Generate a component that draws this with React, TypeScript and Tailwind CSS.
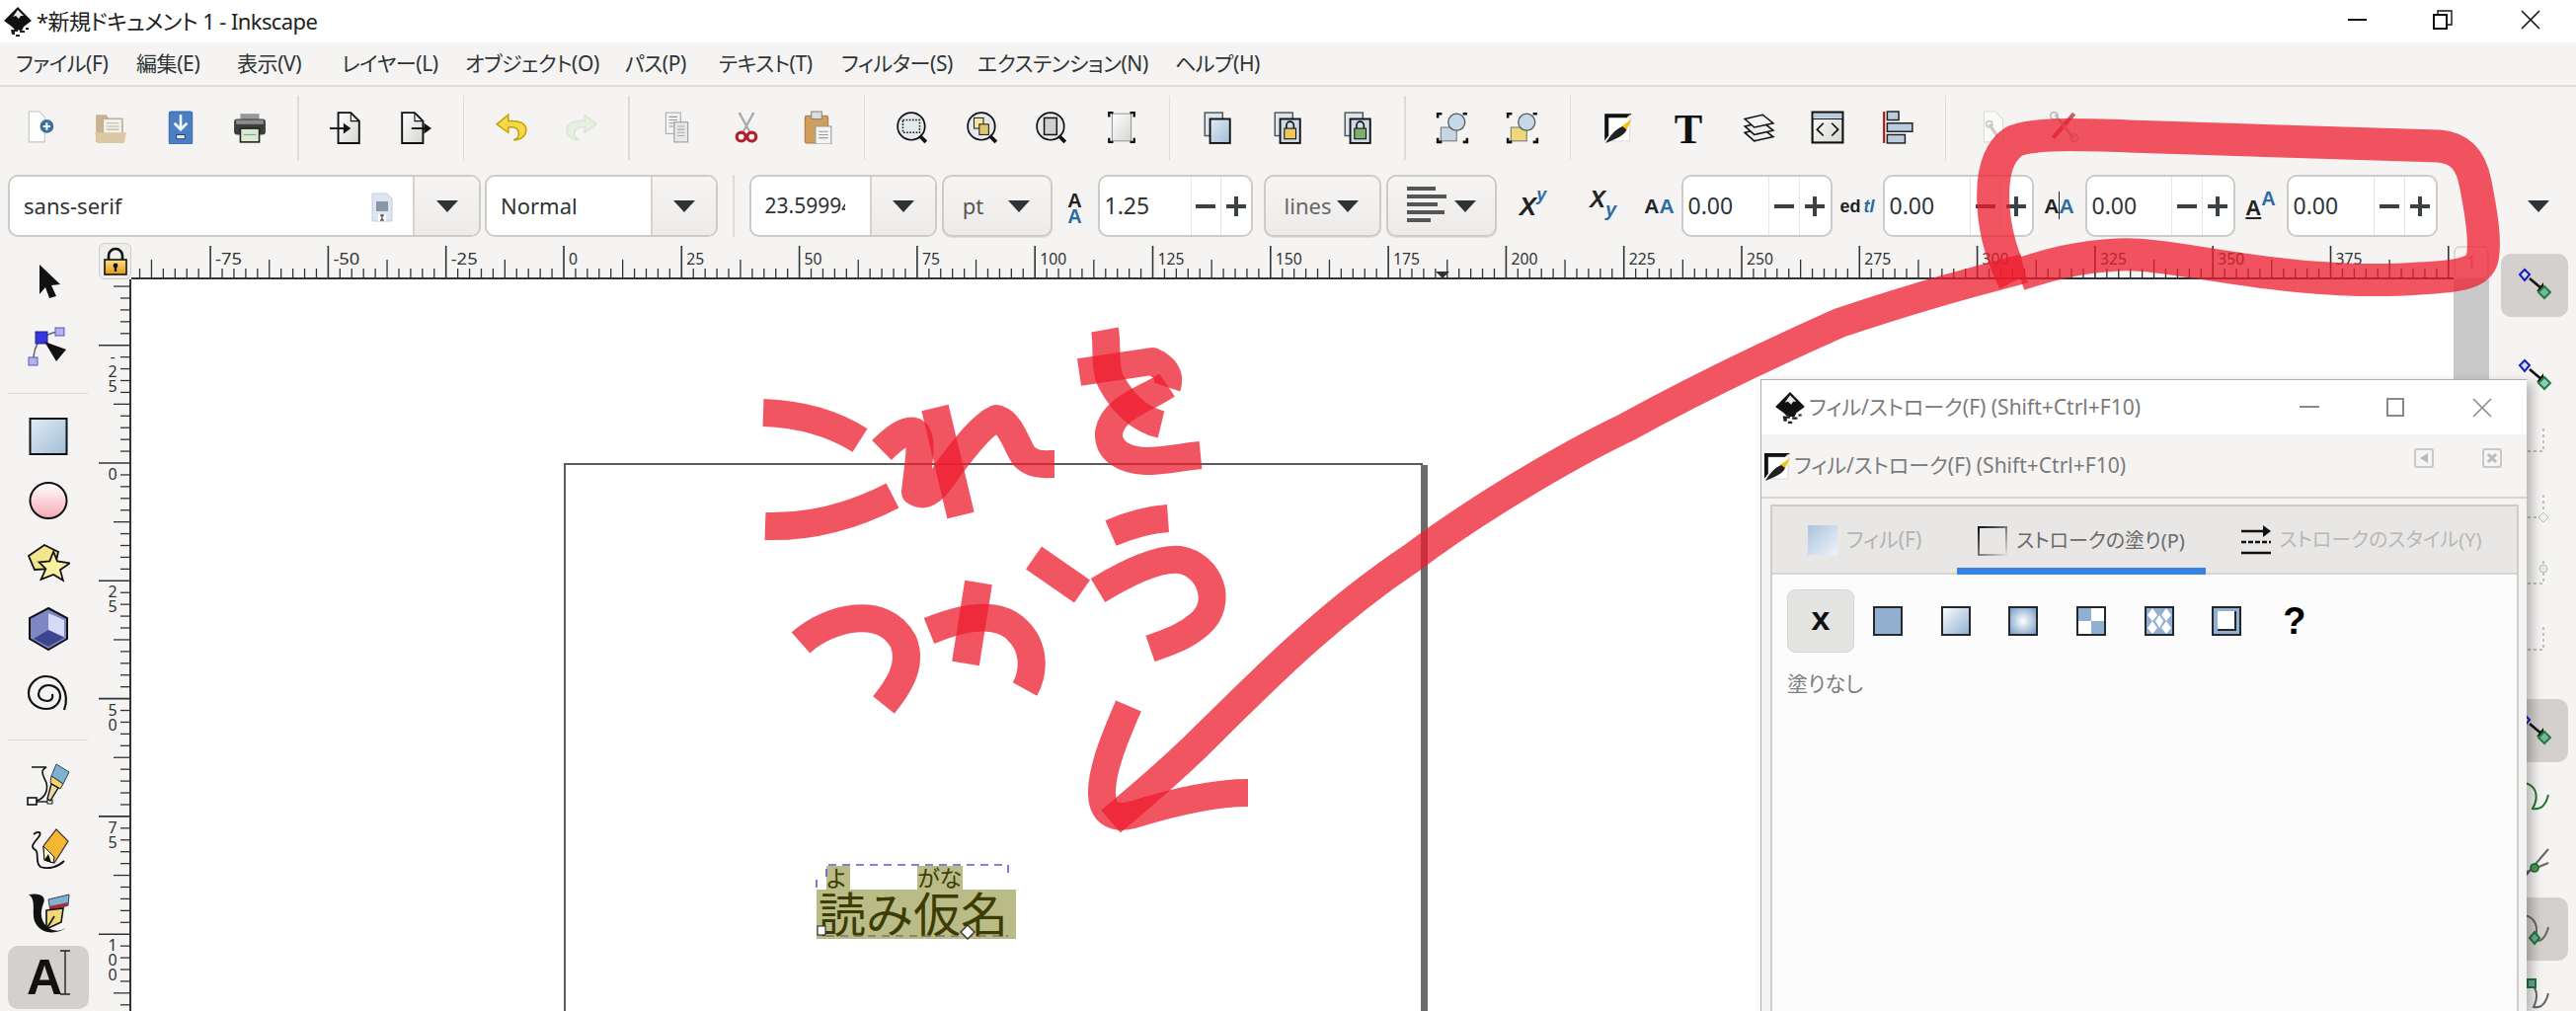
import React from 'react';

const UI_TEXT = '#2e3436';

// shared gradients for the toolbar icons
const Defs = () => (
  <svg className="absolute w-0 h-0">
    <defs>
      <linearGradient id="blueFade" x1="0" y1="0" x2="1" y2="1">
        <stop offset="0" stopColor="#a9c3de" />
        <stop offset="1" stopColor="#eef3f9" />
      </linearGradient>
      <linearGradient id="rectFill" x1="0" y1="0" x2="1" y2="1">
        <stop offset="0" stopColor="#e3ecf4" />
        <stop offset="1" stopColor="#9fbdd8" />
      </linearGradient>
      <linearGradient id="pinkFill" x1="0" y1="0" x2="0" y2="1">
        <stop offset="0" stopColor="#fff" />
        <stop offset="1" stopColor="#f7a9b4" />
      </linearGradient>
      <linearGradient id="pageFill" x1="0" y1="0" x2="1" y2="1">
        <stop offset="0" stopColor="#fff" />
        <stop offset="1" stopColor="#d4d4d0" />
      </linearGradient>
      <linearGradient id="gold" x1="0" y1="0" x2="0" y2="1">
        <stop offset="0" stopColor="#ffe083" />
        <stop offset="1" stopColor="#e39a12" />
      </linearGradient>
      <linearGradient id="strokeEdge" x1="0" y1="0" x2="1" y2="1">
        <stop offset="0" stopColor="#111" />
        <stop offset="1" stopColor="#ddd" />
      </linearGradient>
      <linearGradient id="swatchLinear" x1="0" y1="0" x2="1" y2="1">
        <stop offset="0" stopColor="#fff" />
        <stop offset="1" stopColor="#8eaed0" />
      </linearGradient>
      <radialGradient id="radial" cx="0.5" cy="0.5" r="0.6">
        <stop offset="0" stopColor="#fff" />
        <stop offset="1" stopColor="#7fa3c8" />
      </radialGradient>
    </defs>
  </svg>
);

const Logo = ({ size = 34 }: { size?: number }) => (
  <svg width={size} height={size} viewBox="0 0 32 32">
    <path d="M16 1 L30 15 L22 21 L20 25 L13 24 L10 21 L2 15 Z" fill="#111" />
    <path d="M16 4 L22 10 L19 10 L17 13 L14 10 L11 11 Z" fill="#e8e8e8" />
    <path d="M9 24 h7 v2 h-3 v3 h-3 z M18 25 h5 v2 h-5z M14 29 h4 v2 h-4z M24 22 h3 v2 h-3z" fill="#222" />
  </svg>
);

const S = ({ children, o = 1 }: { children: React.ReactNode; o?: number }) => (
  <svg width="34" height="34" viewBox="0 0 32 32" opacity={o}>{children}</svg>
);

const DocNew = () => (
  <S>
    <path d="M5 1 H15 L20 6 V30 H5 Z" fill="#fff" stroke="#c4c4c4" />
    <circle cx="22" cy="15" r="6.5" fill="#3f6ea3" />
    <path d="M22 11.5 v7 M18.5 15 h7" stroke="#fff" strokeWidth="2" />
  </S>
);
const OpenDoc = () => (
  <S>
    <path d="M2 4 H12 L14 7 H28 V30 H2 Z" fill="#c9b290" />
    <rect x="9" y="8" width="18" height="15" fill="#f3f1ec" stroke="#b6b0a4" />
    <path d="M12 12 h12 M12 15 h12 M12 18 h12" stroke="#bdb7ab" />
    <path d="M1 21 H31 L29 31 H3 Z" fill="#dcc7a5" />
  </S>
);
const SaveDoc = () => (
  <S>
    <rect x="5" y="1" width="22" height="31" rx="2" fill="#4a7fc4" stroke="#3768a8" />
    <path d="M16 4 V17 M10 12 L16 18 L22 12" stroke="#fff" strokeWidth="2.4" fill="none" />
    <rect x="12" y="23" width="8" height="4" fill="#dfe8f3" stroke="#223" strokeWidth="0.7" />
  </S>
);
const PrintDoc = () => (
  <S>
    <rect x="7" y="3" width="18" height="7" fill="#999" />
    <rect x="1" y="8" width="30" height="15" rx="3" fill="#3d3f3f" />
    <rect x="3" y="9" width="26" height="4" fill="#8b8d8c" />
    <rect x="7" y="17" width="18" height="13" fill="#dbe8d2" stroke="#222" strokeWidth="1.5" />
    <path d="M10 23 h12" stroke="#6a9" />
  </S>
);
const ImportDoc = () => (
  <S>
    <path d="M9 2 H21 L29 10 V31 H9 Z" fill="url(#pageFill)" stroke="#111" strokeWidth="1.8" />
    <path d="M21 2 V10 H29" fill="none" stroke="#111" />
    <path d="M1 17 H17" stroke="#111" strokeWidth="1.8" />
    <path d="M14 12 L21 17 L14 22 Z" fill="#111" />
  </S>
);
const ExportDoc = () => (
  <S>
    <path d="M3 2 H15 L23 10 V31 H3 Z" fill="url(#pageFill)" stroke="#111" strokeWidth="1.8" />
    <path d="M15 2 V10 H23" fill="none" stroke="#111" />
    <path d="M12 17 H26" stroke="#111" strokeWidth="1.8" />
    <path d="M24 12 L31 17 L24 22 Z" fill="#111" />
  </S>
);
const Undo = () => (
  <S>
    <path d="M13 4 L2 13 L13 21 V16 C19 15 23 17 23 22 C23 25 21 27 18 28 C25 28 30 24 30 18 C30 12 23 9 13 10 Z" fill="#f6d94a" stroke="#c4a000" strokeWidth="1.4" />
  </S>
);
const Redo = () => (
  <S o={0.6}>
    <path d="M19 4 L30 13 L19 21 V16 C13 15 9 17 9 22 C9 25 11 27 14 28 C7 28 2 24 2 18 C2 12 9 9 19 10 Z" fill="#dfeeda" stroke="#c6dcc0" strokeWidth="1.4" />
  </S>
);
const CopyDoc = () => (
  <S>
    <rect x="6" y="2" width="14" height="20" fill="#f3f3f3" stroke="#aaa" />
    <path d="M9 6 h8 M9 9 h8 M9 12 h8 M9 15 h8" stroke="#999" />
    <rect x="14" y="11" width="13" height="19" fill="#e8e8e8" stroke="#999" />
    <path d="M17 15 h7 M17 18 h7 M17 21 h7 M17 24 h7" stroke="#aaa" />
  </S>
);
const CutDoc = () => (
  <S>
    <path d="M9 2 L19 20 M23 2 L13 20" stroke="#aaa" strokeWidth="2.2" />
    <circle cx="11" cy="25" r="4.2" fill="none" stroke="#b3202a" strokeWidth="3" />
    <circle cx="21" cy="25" r="4.2" fill="none" stroke="#b3202a" strokeWidth="3" />
  </S>
);
const PasteDoc = () => (
  <S>
    <rect x="5" y="5" width="22" height="26" rx="2" fill="#cf9d5c" stroke="#a97a3e" />
    <rect x="11" y="1" width="10" height="7" fill="#ddd" stroke="#888" />
    <rect x="15" y="15" width="15" height="17" fill="#f3f3f3" stroke="#999" />
    <path d="M18 20 h9 M18 23 h9 M18 26 h9" stroke="#999" />
  </S>
);
const Lens = ({ children }: { children: React.ReactNode }) => (
  <S>
    <circle cx="15" cy="15" r="13" fill="#e4e9ec" stroke="#111" strokeWidth="1.6" />
    {children}
    <path d="M23 24 L29 30" stroke="#111" strokeWidth="3.6" />
  </S>
);
const ZoomSel = () => <Lens><rect x="7" y="9" width="16" height="12" fill="none" stroke="#111" strokeWidth="1.4" strokeDasharray="1.5 1.5" /></Lens>;
const ZoomDraw = () => (
  <Lens>
    <rect x="8" y="7" width="9" height="10" fill="#f6e7a0" stroke="#222" />
    <rect x="13" y="13" width="9" height="10" fill="#e0c66a" stroke="#222" />
  </Lens>
);
const ZoomPage = () => <Lens><rect x="9" y="7" width="12" height="16" fill="#cfcfcf" stroke="#111" strokeWidth="1.4" /></Lens>;
const FitPage = () => (
  <S>
    <rect x="7" y="3" width="18" height="26" fill="url(#pageFill)" stroke="#999" />
    <path d="M4 6 V2 H8 M24 2 H28 V6 M4 26 V30 H8 M24 30 H28 V26" fill="none" stroke="#111" strokeWidth="2.2" />
  </S>
);
const Dup = () => (
  <S>
    <rect x="4" y="2" width="17" height="22" fill="#dbe6ef" stroke="#555" strokeWidth="1.4" />
    <rect x="9" y="8" width="19" height="23" fill="url(#rectFill)" stroke="#111" strokeWidth="1.8" />
  </S>
);
const Clone = ({ color }: { color: string }) => (
  <S>
    <rect x="4" y="2" width="17" height="22" fill="#dbe6ef" stroke="#555" strokeWidth="1.4" />
    <rect x="9" y="8" width="19" height="23" fill="#cfdce8" stroke="#111" strokeWidth="1.8" />
    <path d="M15 17 V14 a3.5 3.5 0 0 1 7 0 V17" fill="none" stroke="#111" strokeWidth="1.5" />
    <rect x="13" y="17" width="11" height="10" fill={color} stroke="#111" />
  </S>
);
const Group = ({ color }: { color: string }) => (
  <S>
    <rect x="5" y="16" width="15" height="13" fill={color} stroke="#777" />
    <circle cx="20" cy="11" r="8" fill="#c4d8e8" stroke="#555" strokeWidth="1.2" />
    <path d="M2 7 V3 H6 M2 26 V30 H6 M26 3 H30 M26 30 H30 V26" fill="none" stroke="#111" strokeWidth="2.4" />
  </S>
);
const FillStroke = ({ size = 34 }: { size?: number }) => (
  <svg width={size} height={size} viewBox="0 0 32 32">
    <path d="M3 3 H29 L24 7 H7 V24 L3 29 Z" fill="#111" />
    <path d="M3 29 L7 24 V7 H24 L27 4 V29 Z" fill="#fff" stroke="#bbb" strokeWidth="0.5" />
    <path d="M29 8 L24 18 L19 15 Z" fill="#f5c211" />
    <path d="M20 15 L24 18 C22 24 13 27 4 31 C8 24 13 18 20 15 Z" fill="#222" />
  </svg>
);
const TextIco = () => (
  <svg width="36" height="36" viewBox="0 0 32 32">
    <text x="16" y="30" textAnchor="middle" fontFamily="Liberation Serif" fontWeight="700" fontSize="38" fill="#111">T</text>
  </svg>
);
const Layers = () => (
  <S>
    <path d="M3 21 L20 17 L30 25 L12 29 Z" fill="#eee" stroke="#111" strokeWidth="1.5" />
    <path d="M3 15 L20 11 L30 19 L12 23 Z" fill="#eee" stroke="#111" strokeWidth="1.5" />
    <path d="M3 8 L20 4 L30 12 L12 16 Z" fill="#f4f4f4" stroke="#111" strokeWidth="1.5" />
  </S>
);
const Xml = () => (
  <S>
    <rect x="1.5" y="1.5" width="29" height="29" fill="url(#pageFill)" stroke="#111" strokeWidth="2" />
    <rect x="2.5" y="3" width="27" height="4" fill="#b5c9dc" />
    <path d="M2 8 H30" stroke="#111" />
    <path d="M12 12 L6 18 L12 24 M20 12 L26 18 L20 24" fill="none" stroke="#111" strokeWidth="1.6" />
  </S>
);
const Align = () => (
  <S>
    <path d="M3 1 V31" stroke="#a11" strokeWidth="2" />
    <rect x="6" y="1" width="11" height="8" fill="#b9cde0" stroke="#222" strokeWidth="1.4" />
    <rect x="6" y="12" width="24" height="8" fill="#b9cde0" stroke="#222" strokeWidth="1.4" />
    <rect x="6" y="23" width="17" height="8" fill="#b9cde0" stroke="#222" strokeWidth="1.4" />
  </S>
);
const PrefsDoc = () => (
  <S o={0.55}>
    <path d="M7 1 H18 L25 8 V30 H7 Z" fill="#fff" stroke="#ccc" />
    <path d="M12 13 L20 25" stroke="#aaa" strokeWidth="3" />
    <circle cx="12" cy="13" r="3" fill="none" stroke="#aaa" strokeWidth="1.5" />
  </S>
);
const Tools = () => (
  <S o={0.75}>
    <path d="M26 3 L6 26" stroke="#b3303a" strokeWidth="4" />
    <path d="M8 4 L26 27" stroke="#aaa" strokeWidth="2.5" />
    <circle cx="7" cy="5" r="3.5" fill="none" stroke="#aaa" strokeWidth="1.5" />
    <circle cx="26" cy="26" r="3.5" fill="none" stroke="#aaa" strokeWidth="1.5" />
  </S>
);

const mainTools: (React.FC | null)[] = [
  DocNew, OpenDoc, SaveDoc, PrintDoc, null,
  ImportDoc, ExportDoc, null,
  Undo, Redo, null,
  CopyDoc, CutDoc, PasteDoc, null,
  ZoomSel, ZoomDraw, ZoomPage, FitPage, null,
  Dup, () => <Clone color="#f0c95c" />, () => <Clone color="#7fae6b" />, null,
  () => <Group color="#c6d6e4" />, () => <Group color="#f0d77a" />, null,
  FillStroke, TextIco, Layers, Xml, Align, null,
  PrefsDoc, Tools,
];

// menu label and the distance to the start of the next one
const menus: [string, string][] = [
  ['ファイル(F)', 'w-[122px]'],
  ['編集(E)', 'w-[102px]'],
  ['表示(V)', 'w-[106px]'],
  ['レイヤー(L)', 'w-[125px]'],
  ['オブジェクト(O)', 'w-[162px]'],
  ['パス(P)', 'w-[95px]'],
  ['テキスト(T)', 'w-[124px]'],
  ['フィルター(S)', 'w-[138px]'],
  ['エクステンション(N)', 'w-[200px]'],
  ['ヘルプ(H)', 'w-[100px]'],
];

const Caret = ({ big = true }: { big?: boolean }) => (
  <svg width={big ? 24 : 20} height={14} viewBox="0 0 24 14">
    <path d="M1 1 H23 L12 13 Z" fill="#2e3436" />
  </svg>
);

const ComboBtn = ({ className, children }: { className: string; children: React.ReactNode }) => (
  <div className={`h-[63px] flex items-center justify-center border-2 border-[#cdcbc7] rounded-[10px] bg-gradient-to-b from-[#f6f5f4] to-[#edebe9] shadow-[0_1px_1px_rgba(0,0,0,.1)] ${className}`}>
    {children}
  </div>
);

const Combo = ({ w, split, text }: { w: string; split: string; text: React.ReactNode }) => (
  <div className={`h-[63px] flex border-2 border-[#cdcbc7] rounded-[10px] overflow-hidden bg-white ${w}`}>
    <div className="flex-1 flex items-center pl-[14px] text-[22px] relative">{text}</div>
    <div className={`flex items-center justify-center border-l-2 border-[#d5d3cf] bg-gradient-to-b from-[#f6f5f4] to-[#edebe9] ${split}`}>
      <Caret />
    </div>
  </div>
);

const Spin = ({ value, w, entry, cell }: { value: string; w: string; entry: string; cell: string }) => (
  <div className={`h-[63px] flex border-2 border-[#cdcbc7] rounded-[10px] overflow-hidden bg-white ${w}`}>
    <div className={`flex items-center pl-[5px] text-[23px] ${entry}`}>{value}</div>
    <div className={`flex items-center justify-center border-l border-[#e6e5e3] ${cell}`}>
      <div className="w-[20px] h-[4px] bg-[#3b4144]" />
    </div>
    <div className={`flex items-center justify-center border-l border-[#e6e5e3] relative ${cell}`}>
      <div className="w-[20px] h-[4px] bg-[#3b4144]" />
      <div className="absolute w-[4px] h-[20px] bg-[#3b4144]" />
    </div>
  </div>
);

// two letter "A" style icons in the text toolbar, kept as live text
const TA = ({ children, className }: { children: React.ReactNode; className: string }) => (
  <span className={`font-['Liberation_Sans',sans-serif] font-bold leading-none ${className}`}>{children}</span>
);

const RULER_W = 2352;
const UNIT = 119.3;
const ZERO_X = 571 - 133;
const ZERO_Y = 469 - 283;

const HRuler = () => {
  const ticks: React.ReactNode[] = [];
  const labels: React.ReactNode[] = [];
  for (let i = -100; i <= 450; i += 2.5) {
    const x = ZERO_X + (i / 25) * UNIT;
    if (x < 0 || x > RULER_W) continue;
    const major = i % 25 === 0;
    const mid = i % 12.5 === 0;
    ticks.push(<line key={i} x1={x} x2={x} y1={major ? 3 : mid ? 17 : 26} y2={36} stroke={UI_TEXT} strokeWidth={major ? 1.6 : 1.3} />);
    if (major && i >= -75) {
      labels.push(
        <text key={`l${i}`} x={x + 5} y={22} fontSize="17" fill={UI_TEXT} fontFamily="Noto Sans" textLength={String(i).length * 9} lengthAdjust="spacingAndGlyphs">{i}</text>
      );
    }
  }
  return (
    <svg width={RULER_W} height={37} className="block">
      {ticks}
      {labels}
      <line x1={0} x2={RULER_W} y1={36} y2={36} stroke={UI_TEXT} strokeWidth="2" />
      <path d="M1321 29 H1335 L1328 36 Z" fill={UI_TEXT} />
    </svg>
  );
};

const VRuler = () => {
  const ticks: React.ReactNode[] = [];
  const labels: React.ReactNode[] = [];
  for (let i = -75; i <= 200; i += 2.5) {
    const y = ZERO_Y + (i / 25) * UNIT;
    if (y < 0 || y > 741) continue;
    const major = i % 25 === 0;
    const mid = i % 12.5 === 0;
    ticks.push(<line key={i} y1={y} y2={y} x1={major ? 0 : mid ? 15 : 22} x2={33} stroke={UI_TEXT} strokeWidth={major ? 1.6 : 1.3} />);
    if (major) {
      String(i).split('').forEach((ch, n) => {
        labels.push(
          <text key={`l${i}-${n}`} x={14} y={y + 17 + n * 15} textAnchor="middle" fontSize="16" fill={UI_TEXT} fontFamily="Noto Sans">{ch}</text>
        );
      });
    }
  }
  return (
    <svg width={33} height={741} className="block shrink-0">
      {ticks}
      {labels}
      <line x1={32} x2={32} y1={0} y2={741} stroke={UI_TEXT} strokeWidth="2" />
    </svg>
  );
};

const T = ({ children }: { children: React.ReactNode }) => (
  <svg width="44" height="44" viewBox="0 0 44 44">{children}</svg>
);

const leftTools: React.ReactNode[] = [
  <T><path d="M13 6 L34 26 L25 27 L30 38 L23 40 L19 29 L13 36 Z" fill="#111" transform="translate(0 -1)" /></T>,
  <T>
    <path d="M7 36 C7 20 15 9 33 7" fill="none" stroke="#666" strokeWidth="1.6" />
    <rect x="9" y="7" width="12" height="12" fill="#3535d8" stroke="#2222a0" />
    <rect x="29" y="3" width="9" height="8" fill="#b3b3ee" stroke="#5555cc" />
    <rect x="2" y="33" width="9" height="8" fill="#b3b3ee" stroke="#5555cc" />
    <path d="M18 17 L40 25 L30 37 Z" fill="#111" />
  </T>,
];

const shapeTools: React.ReactNode[] = [
  <T><rect x="3.5" y="4" width="37" height="36" fill="url(#rectFill)" stroke="#111" strokeWidth="2" /></T>,
  <T><ellipse cx="22" cy="22" rx="18.5" ry="18" fill="url(#pinkFill)" stroke="#111" strokeWidth="2" /></T>,
  <T>
    <path d="M2 13 L18 2 L32 9 L28 26 L8 27 Z" fill="#f4e58f" stroke="#111" strokeWidth="1.8" />
    <path d="M27 9 L31 19 L44 21 L34 28 L37 39 L27 33 L14 38 L19 27 L12 20 L23 19 Z" fill="#faef9e" stroke="#111" strokeWidth="1.8" transform="scale(.97) translate(1 0)" />
  </T>,
  <T>
    <path d="M22 1 L41 11 V32 L22 43 L3 32 V11 Z" fill="#7e86c4" stroke="#111" strokeWidth="2" />
    <path d="M22 6 L38 13 V30 L22 23 Z" fill="#d6d9f8" />
    <path d="M22 23 L38 31 L22 40 L7 32 Z" fill="#3d4590" />
  </T>,
  <T>
    <path d="M38 39 C44 22 34 5 20 5 C9 5 2 14 2 22 C2 33 12 38 20 38 C29 38 34 31 34 25 C34 18 28 14 22 14 C16 14 12 19 12 23 C12 28 17 30 21 30 C25 30 27 27 26 23" fill="none" stroke="#111" strokeWidth="2.2" />
  </T>,
];

const drawTools: React.ReactNode[] = [
  <T>
    <path d="M5 4 H20 C12 8 18 14 20 20 C22 28 18 36 10 38 H6" fill="none" stroke="#111" strokeWidth="1.6" />
    <rect x="1" y="35" width="9" height="7" fill="#fff" stroke="#111" strokeWidth="1.6" />
    <path d="M10 39 H24" stroke="#111" strokeWidth="1.4" />
    <rect x="21" y="37" width="5" height="4" fill="#fff" stroke="#111" />
    <path d="M30 1 L43 9 L37 21 L25 13 Z" fill="#7fb1d0" stroke="#345" />
    <path d="M25 13 L37 21 L34 26 L24 20 Z" fill="#f5d46b" stroke="#333" />
    <path d="M25 21 L32 25 L24 38 L21 36 Z" fill="#ead9a0" stroke="#111" strokeWidth="1.4" />
  </T>,
  <T>
    <path d="M7 7 C12 3 16 5 12 10 C7 16 3 20 9 23 C13 26 8 36 14 40 C22 43 32 40 38 34" fill="none" stroke="#111" strokeWidth="1.8" />
    <path d="M30 2 L42 14 L28 36 L18 33 L17 19 Z" fill="#f5b731" stroke="#333" strokeWidth="1.2" />
    <path d="M17 19 L28 30 L27 36 L18 33 Z" fill="#fff4c8" stroke="#111" />
    <path d="M18 33 L22 27 L25 36 Z" fill="#111" />
  </T>,
  <T>
    <path d="M2 3 C14 1 20 5 17 12 C13 22 14 32 24 38 C32 42 38 38 42 36 C30 44 14 44 8 30 C5 20 10 8 2 3 Z" fill="#111" />
    <path d="M22 8 L43 3 L42 14 L24 20 Z" fill="#7fb1d0" stroke="#345" />
    <path d="M23 15 L42 11 L41 14 L24 19 Z" fill="#b3262e" />
    <path d="M20 19 L37 17 L35 31 L20 38 Z" fill="#f1d879" stroke="#111" strokeWidth="1.6" />
    <path d="M20 38 L28 25" stroke="#111" strokeWidth="1.6" />
  </T>,
];

const ToolBtn = ({ active, children }: { active?: boolean; children: React.ReactNode }) => (
  <div className={`w-[82px] h-[64px] flex items-center justify-center rounded-[10px] ${active ? 'bg-[#d3d0cd]' : ''}`}>
    {children}
  </div>
);

const Diamonds = ({ c = '#6fb8a3' }: { c?: string }) => (
  <svg width="68" height="64" viewBox="0 0 68 64">
    <path d="M24 14 L29 19 L24 25 L19 19 Z" fill="#c8dcf5" stroke="#1d1dbb" strokeWidth="2" transform="translate(0 2)" />
    <path d="M29 25 L42 36" stroke="#111" strokeWidth="2.6" />
    <path d="M36 38 L43 37 L43 29 Z" fill="#111" />
    <path d="M44 33 L50 39 L44 45 L38 39 Z" fill={c} stroke="#2b7a3c" strokeWidth="2" />
  </svg>
);

const Dashed = ({ extra }: { extra?: React.ReactNode }) => (
  <svg width="68" height="64" viewBox="0 0 68 64">
    <path d="M43 18 V41 H24" fill="none" stroke="#aaa" strokeWidth="1.4" strokeDasharray="3 3" />
    {extra}
  </svg>
);

const ToolBtnSnap = ({ active, children }: { active?: boolean; children: React.ReactNode }) => (
  <div className={`w-[68px] h-[64px] shrink-0 rounded-[10px] ${active ? 'bg-[#d3d0cd]' : ''}`}>{children}</div>
);

const SnapBar = () => (
  <div className="flex-1 bg-[#f5f4f3] pt-[11px] pl-[12px] flex flex-col">
    <ToolBtnSnap active><Diamonds /></ToolBtnSnap>
    <div className="w-[68px] h-[1px] bg-[#d9d7d4] mt-[14px] mb-[14px]" />
    <div className="flex flex-col gap-[3px]">
      <ToolBtnSnap><Diamonds c="#84cdbf" /></ToolBtnSnap>
      <ToolBtnSnap><Dashed /></ToolBtnSnap>
      <ToolBtnSnap><Dashed extra={<path d="M43 36 L48 41 L43 46 L38 41 Z" fill="#eef2ee" stroke="#bbb" />} /></ToolBtnSnap>
      <ToolBtnSnap><Dashed extra={<circle cx="43" cy="26" r="4" fill="#e4ece4" stroke="#bbb" />} /></ToolBtnSnap>
      <ToolBtnSnap><Dashed /></ToolBtnSnap>
    </div>
    <div className="w-[68px] h-[1px] bg-[#d9d7d4] mt-[14px] mb-[13px]" />
    <div className="flex flex-col gap-[3px]">
      <ToolBtnSnap active><Diamonds c="#6fb8a3" /></ToolBtnSnap>
      <ToolBtnSnap>
        <svg width="68" height="64" viewBox="0 0 68 64">
          <path d="M24 18 C34 20 40 30 32 44 C42 46 46 38 48 30" fill="none" stroke="#1f7a2c" strokeWidth="2" />
        </svg>
      </ToolBtnSnap>
      <ToolBtnSnap>
        <svg width="68" height="64" viewBox="0 0 68 64">
          <path d="M24 46 L48 18 M24 42 L48 32" stroke="#666" strokeWidth="2" />
          <circle cx="34" cy="37" r="4" fill="#4c9a5c" stroke="#1f6a2c" strokeWidth="1.6" />
        </svg>
      </ToolBtnSnap>
      <ToolBtnSnap active>
        <svg width="68" height="64" viewBox="0 0 68 64">
          <path d="M24 18 C34 20 40 30 33 44 C42 46 46 38 48 30" fill="none" stroke="#666" strokeWidth="2" />
          <path d="M34 35 L39 41 L34 47 L29 41 Z" fill="#6fa8b8" stroke="#1f7a2c" strokeWidth="2" />
        </svg>
      </ToolBtnSnap>
      <ToolBtnSnap>
        <svg width="68" height="64" viewBox="0 0 68 64">
          <path d="M24 18 C34 20 40 30 33 44 C42 46 46 38 48 30" fill="none" stroke="#666" strokeWidth="2" />
          <rect x="27" y="16" width="8" height="8" fill="#6fa8b8" stroke="#1f7a2c" strokeWidth="2" />
        </svg>
      </ToolBtnSnap>
    </div>
  </div>
);

const PaintMode = ({ children }: { children: React.ReactNode }) => (
  <div className="w-[68.6px] h-[64px] flex items-center justify-center">
    <svg width="30" height="30" viewBox="0 0 30 30">{children}</svg>
  </div>
);

const FillDialog = () => (
  <div className="absolute left-[1783px] top-[384px] w-[776px] h-[640px] flex flex-col border-t border-l border-[#b0b0b0] bg-[#f5f4f3] shadow-[6px_4px_10px_rgba(0,0,0,.25)]">
    <div className="h-[55px] bg-white flex items-center pl-[12px] text-[#7a7a7a] shrink-0 relative">
      <Logo size={34} />
      <span className="ml-[2px] text-[21px]">フィル/ストローク(F) (Shift+Ctrl+F10)</span>
      <div className="absolute left-[545px] top-[26px] w-[20px] h-[2px] bg-[#8a8a8a]" />
      <div className="absolute left-[633px] top-[18px] w-[18px] h-[19px] border-2 border-[#8a8a8a]" />
      <svg className="absolute left-[720px] top-[18px]" width="20" height="20" viewBox="0 0 20 20">
        <path d="M1 1 L19 19 M19 1 L1 19" stroke="#8a8a8a" strokeWidth="1.6" />
      </svg>
    </div>
    <div className="h-[65px] flex items-center text-[#7a7a7a] border-b-2 border-[#d8d6d3] shrink-0 relative">
      <FillStroke size={32} />
      <span className="ml-[1px] text-[21px]">フィル/ストローク(F) (Shift+Ctrl+F10)</span>
      <div className="absolute left-[661px] top-[14px] w-[20px] h-[20px] border-2 border-[#c8c8c8] rounded-[3px] flex items-center justify-center">
        <svg width="10" height="12" viewBox="0 0 10 12"><path d="M9 1 V11 L1 6 Z" fill="#bbb" /></svg>
      </div>
      <div className="absolute left-[730px] top-[14px] w-[20px] h-[20px] border-2 border-[#c8c8c8] rounded-[3px] flex items-center justify-center">
        <svg width="12" height="12" viewBox="0 0 12 12"><path d="M2 2 L10 10 M10 2 L2 10" stroke="#bbb" strokeWidth="3" /></svg>
      </div>
    </div>
    <div className="flex-1 ml-[9px] mr-[8px] mt-[6px] flex flex-col border-x-2 border-t-2 border-[#cfcdca] bg-[#fcfcfc] min-h-0">
      <div className="h-[69px] bg-[#e8e7e5] border-b-2 border-[#d8d6d3] flex shrink-0">
        <div className="w-[187px] flex items-center justify-center gap-[9px] text-[#b3b3b3] text-[21px]">
          <svg width="30" height="30"><rect width="30" height="30" fill="url(#blueFade)" /></svg>
          <span>フィル(F)</span>
        </div>
        <div className="w-[252px] flex items-center justify-center gap-[9px] text-[#6a6a6a] text-[20px] border-b-[7px] border-[#3584e4] h-[69px] pt-[7px]">
          <svg width="30" height="30"><rect x="1" y="1" width="28" height="28" fill="none" stroke="url(#strokeEdge)" strokeWidth="2" /></svg>
          <span>ストロークの塗り(P)</span>
        </div>
        <div className="flex-1 flex items-center justify-center gap-[9px] text-[#b8b8b8] text-[20px]">
          <svg width="30" height="30" viewBox="0 0 30 30">
            <path d="M0 6 H24 M0 28 H30" stroke="#111" strokeWidth="2.4" />
            <path d="M0 17 H30" stroke="#111" strokeWidth="2.4" strokeDasharray="5 2" />
            <path d="M22 0 L30 6 L22 12 Z" fill="#111" />
          </svg>
          <span>ストロークのスタイル(Y)</span>
        </div>
      </div>
      <div className="pl-[15px] pt-[15px] flex items-center">
        <div className="w-[68px] h-[64px] rounded-[8px] bg-[#e3e3e1] border border-[#d6d6d3] flex items-center justify-center font-bold text-[34px] leading-none pb-[6px] text-[#111] font-['Liberation_Sans',sans-serif]">x</div>
        <div className="flex">
          <PaintMode><rect x="1" y="1" width="28" height="28" fill="#92b1d1" stroke="#23282c" strokeWidth="2" /></PaintMode>
          <PaintMode><rect x="1" y="1" width="28" height="28" fill="url(#swatchLinear)" stroke="#23282c" strokeWidth="2" /></PaintMode>
          <PaintMode><rect x="1" y="1" width="28" height="28" fill="url(#radial)" stroke="#23282c" strokeWidth="2" /></PaintMode>
          <PaintMode>
            <rect x="1" y="1" width="28" height="28" fill="#fff" />
            <rect x="2" y="2" width="13" height="13" fill="#92b1d1" />
            <rect x="15" y="15" width="13" height="13" fill="#92b1d1" />
            <rect x="1" y="1" width="28" height="28" fill="none" stroke="#23282c" strokeWidth="2" />
          </PaintMode>
          <PaintMode>
            <rect x="1" y="1" width="28" height="28" fill="#92b1d1" />
            <path d="M8 2 L13 9 L8 15 L3 9 Z M22 2 L27 9 L22 15 L17 9 Z M8 15 L13 22 L8 28 L3 22 Z M22 15 L27 22 L22 28 L17 22 Z M15 9 L19 15 L15 22 L11 15 Z" fill="#fff" />
            <rect x="1" y="1" width="28" height="28" fill="none" stroke="#23282c" strokeWidth="2" />
          </PaintMode>
          <PaintMode>
            <rect x="1" y="1" width="28" height="28" fill="#92b1d1" stroke="#23282c" strokeWidth="2" />
            <rect x="6" y="5" width="18" height="19" fill="#fff" />
            <path d="M6 24 H24 V5" fill="none" stroke="#23282c" strokeWidth="2" />
          </PaintMode>
          <div className="w-[68.6px] h-[64px] flex items-center justify-center font-['Liberation_Sans',sans-serif] font-bold text-[38px] text-black">?</div>
        </div>
      </div>
      <div className="pl-[15px] mt-[17px] text-[#7d7d7d] text-[21px] leading-[28px]">塗りなし</div>
    </div>
  </div>
);

// hand drawn annotation on top of the screenshot, one path per pen stroke
const strokes = [
  'M773 418 Q830 420 871 446',
  'M775 533 Q840 535 904 502',
  'M947 413 L973 522',
  'M893 456 C905 444 918 434 926 437 C936 442 930 470 927 498 C938 505 948 495 962 473 C978 452 995 430 1009 424 C1024 428 1028 448 1037 462 C1047 472 1058 470 1068 470',
  'M1119 334 C1122 350 1118 372 1125 386 C1138 410 1155 425 1176 430',
  'M1093 377 L1167 366 C1180 372 1186 380 1182 392',
  'M1182 390 C1160 405 1128 412 1123 438 C1122 458 1140 466 1160 467 C1180 467 1195 463 1216 461',
  'M811 651 C840 625 895 612 915 650 C925 675 908 698 895 714',
  'M941 639 C975 625 1010 618 1030 638 C1048 655 1048 680 1038 698',
  'M991 590 L978 672',
  'M1047 565 L1096 599',
  'M1125 540 Q1155 527 1183 525',
  'M1112 598 C1145 578 1175 565 1195 567 C1225 572 1240 610 1215 632 C1200 645 1185 650 1165 657',
];

const Annotation = () => (
  <svg className="absolute inset-0 pointer-events-none" width="2609" height="1024" viewBox="0 0 2609 1024">
    <g fill="none" stroke="#ed1c2e" strokeLinejoin="round">
      {strokes.map((d, i) => (
        <path key={i} d={d} strokeWidth={28} opacity={0.75} />
      ))}
      <path d="M1143 715 C1130 745 1115 780 1116 805 C1117 825 1130 830 1148 825 C1190 812 1230 803 1264 803" strokeWidth={28} opacity={0.75} />
      <path d="M2050 272 C2000 285 1950 298 1863 327 C1800 355 1713 397 1647 433 C1580 465 1490 520 1430 565 C1343 623 1276 692 1210 757 C1170 795 1145 815 1125 832" strokeWidth={30} opacity={0.75} />
      <path d="M2040 285 C2030 265 2021 240 2019 210 C2017 180 2022 155 2040 143 C2060 135 2100 136 2156 138 C2250 141 2350 145 2470 148 C2494 150 2503 165 2507 185 C2513 215 2518 245 2514 262 C2510 277 2490 280 2450 282 C2400 286 2340 282 2295 276 C2230 268 2180 256 2145 258 C2105 260 2075 268 2045 278" strokeWidth={33} opacity={0.75} />
    </g>
  </svg>
);

const App: React.FC = () => {
  return (
    <div className="relative w-[2609px] h-[1024px] overflow-hidden flex flex-col bg-[#f5f4f3] text-[#2e3436] font-['Noto_Sans','Noto_Sans_CJK_JP',sans-serif] [font-feature-settings:'palt']">
      <Defs />

      {/* title bar */}
      <div className="h-[43px] bg-white flex items-center pl-[2px] text-[22px] tracking-[-0.6px] text-[#222] shrink-0 relative">
        <Logo size={32} />
        <span className="ml-[3px]">*新規ドキュメント 1 - Inkscape</span>
        <div className="absolute left-[2378px] top-[19px] w-[19px] h-[2px] bg-[#111]" />
        <svg className="absolute left-[2464px] top-[10px]" width="20" height="20" viewBox="0 0 20 20">
          <rect x="1" y="5" width="13" height="14" fill="none" stroke="#111" strokeWidth="2" />
          <path d="M5 5 V1 H19 V15 H14" fill="none" stroke="#111" strokeWidth="1.4" />
        </svg>
        <svg className="absolute left-[2553px] top-[10px]" width="20" height="20" viewBox="0 0 20 20">
          <path d="M1 1 L19 19 M19 1 L1 19" stroke="#111" strokeWidth="1.6" />
        </svg>
      </div>

      {/* menu bar */}
      <div className="h-[45px] flex items-center pl-[16px] text-[21px] tracking-[-0.4px] border-b-2 border-[#dddbd8] shrink-0">
        {menus.map(([label, width]) => (
          <span key={label} className={`${width} whitespace-nowrap`}>{label}</span>
        ))}
      </div>

      {/* commands toolbar */}
      <div className="h-[82px] flex items-center pl-[5.6px] shrink-0">
        {mainTools.map((Icon, i) =>
          Icon ? (
            <div key={i} className="w-[70.8px] flex items-center justify-center"><Icon /></div>
          ) : (
            <div key={i} className="w-[26px] flex justify-center"><div className="w-[1.5px] h-[65px] bg-[#dedcd9]" /></div>
          )
        )}
      </div>

      {/* text tool controls */}
      <div className="h-[63px] mt-[7px] flex items-center pl-[8px] shrink-0 relative">
        <Combo
          w="w-[479px]"
          split="w-[67px]"
          text={
            <>
              sans-serif
              <svg className="absolute right-[20px] top-[16px]" width="22" height="30" viewBox="0 0 22 30">
                <path d="M1 1 H16 L21 6 V29 H1 Z" fill="#dce6f2" stroke="#c2cedb" />
                <rect x="5" y="9" width="12" height="10" fill="#8a96a5" />
                <rect x="7" y="22" width="8" height="7" fill="#fff" />
                <path d="M9 23 h4 M11 23 v5 M9 28 h4" stroke="#111" />
              </svg>
            </>
          }
        />
        <Combo w="w-[236px] ml-[4px]" split="w-[66px]" text="Normal" />
        <div className="w-[1.5px] h-[63px] bg-[#dedcd9] ml-[15px]" />
        <Combo
          w="w-[190px] ml-[15px]"
          split="w-[66px]"
          text={<span className="block w-[81px] overflow-hidden whitespace-nowrap text-[21px]">23.59994</span>}
        />
        <ComboBtn className="w-[112px] ml-[5px] gap-[24px] text-[22px] text-[#555]"><span>pt</span><Caret /></ComboBtn>
        <div className="w-[46px] flex flex-col items-center">
          <TA className="text-[#222] text-[20px] h-[16px]">A</TA>
          <TA className="text-[#2c6ca3] text-[20px] h-[16px]">A</TA>
        </div>
        <Spin value="1.25" w="w-[157px]" entry="w-[94px]" cell="w-[31px]" />
        <ComboBtn className="w-[119px] ml-[11px] gap-[5px] text-[22px] text-[#666]"><span>lines</span><Caret /></ComboBtn>
        <ComboBtn className="w-[112px] ml-[5px] gap-[7px]">
          <svg width="42" height="44" viewBox="0 0 42 44">
            <path d="M2 4 H31 M2 12 H42 M2 20 H33 M2 28 H40 M2 36 H26" stroke="#555" strokeWidth="4" />
          </svg>
          <Caret />
        </ComboBtn>
        <div className="w-[72px] ml-[1px] flex justify-center items-start">
          <TA className="italic text-[#222] text-[26px]">X</TA>
          <TA className="italic text-[#2c6ca3] text-[18px] -mt-[8px]">y</TA>
        </div>
        <div className="w-[70px] flex justify-center items-start">
          <TA className="italic text-[#222] text-[24px] -mt-[6px]">X</TA>
          <TA className="italic text-[#2c6ca3] text-[20px] mt-[6px]">y</TA>
        </div>
        <div className="w-[44px] flex justify-center">
          <TA className="text-[#222] text-[21px]">A</TA>
          <TA className="text-[#2c6ca3] text-[21px]">A</TA>
        </div>
        <Spin value="0.00" w="w-[153px]" entry="w-[88px]" cell="w-[32px]" />
        <div className="w-[51px] flex justify-center gap-[3px] overflow-hidden">
          <TA className="text-[#222] text-[18px]">ed</TA>
          <TA className="text-[#2c6ca3] text-[18px] italic">tl</TA>
        </div>
        <Spin value="0.00" w="w-[153px]" entry="w-[88px]" cell="w-[32px]" />
        <div className="w-[52px] flex justify-center relative">
          <TA className="text-[#222] text-[21px]">A</TA>
          <TA className="text-[#2c6ca3] text-[21px]">A</TA>
          <div className="absolute left-[25px] top-[-4px] w-[1.5px] h-[28px] bg-[#222]" />
        </div>
        <Spin value="0.00" w="w-[152px]" entry="w-[88px]" cell="w-[32px]" />
        <div className="w-[52px] flex justify-center relative">
          <TA className="text-[#222] text-[22px] mt-[4px] underline">A</TA>
          <TA className="text-[#2c6ca3] text-[20px] -mt-[5px]">A</TA>
        </div>
        <Spin value="0.00" w="w-[153px]" entry="w-[88px]" cell="w-[32px]" />
        <div className="ml-[90px]"><Caret /></div>
      </div>

      {/* workspace */}
      <div className="flex-1 mt-[6px] flex min-h-0">
        <div className="w-[100px] pt-[7px] pl-[8px] flex flex-col shrink-0">
          <div className="flex flex-col gap-[2px]">
            {leftTools.map((t, i) => <ToolBtn key={i}>{t}</ToolBtn>)}
          </div>
          <div className="w-[81px] h-[1px] bg-[#dcdad7] mt-[15px] mb-[11px]" />
          <div className="flex flex-col gap-[1px]">
            {shapeTools.map((t, i) => <ToolBtn key={i}>{t}</ToolBtn>)}
          </div>
          <div className="w-[81px] h-[1px] bg-[#dcdad7] mt-[15px] mb-[13px]" />
          <div className="flex flex-col gap-[1px]">
            {drawTools.map((t, i) => <ToolBtn key={i}>{t}</ToolBtn>)}
            <ToolBtn active>
              <div className="relative flex items-center justify-center -ml-[8px]">
                <span className="font-['Liberation_Sans',sans-serif] font-bold text-[50px] leading-none text-[#111]">A</span>
                <svg className="absolute right-[-9px] top-[-3px]" width="12" height="46" viewBox="0 0 12 46">
                  <path d="M1 1 H11 M6 1 V45 M1 45 H11" stroke="#222" strokeWidth="1.4" fill="none" />
                </svg>
              </div>
            </ToolBtn>
          </div>
        </div>

        <div className="w-[2385px] shrink-0 flex flex-col min-h-0">
          <div className="h-[37px] flex shrink-0">
            <div className="w-[33px] h-[37px] border border-[#cfcdca] rounded-[6px] flex items-center justify-center bg-[#efeeec]">
              <svg width="26" height="30" viewBox="0 0 26 30">
                <path d="M6 13 V9 a7 7 0 0 1 14 0 V13" fill="none" stroke="#111" strokeWidth="2.6" />
                <rect x="2" y="13" width="22" height="15" fill="url(#gold)" stroke="#111" strokeWidth="1.6" />
                <circle cx="13" cy="19" r="2.4" fill="#111" />
                <path d="M13 19 V25" stroke="#111" strokeWidth="2.4" />
              </svg>
            </div>
            <HRuler />
          </div>
          <div className="flex-1 flex min-h-0">
            <VRuler />
            <div className="flex-1 bg-white relative overflow-hidden">
              {/* page outline and its drop shadow */}
              <div className="absolute left-[438px] top-[186px] w-[870px] h-[600px] border-t-2 border-x-2 border-[#5c5c5c]" />
              <div className="absolute left-[1306px] top-[188px] w-[7px] h-[600px] bg-[#6b6b6b]" />

              {/* text object being edited */}
              <div className="absolute left-[704px] top-[594px] w-[24px] h-[24px] bg-[#babc87] text-[#3c3c04] text-[23px] leading-[24px]">よ</div>
              <div className="absolute left-[796px] top-[594px] w-[46px] h-[24px] bg-[#babc87] text-[#3c3c04] text-[23px] leading-[24px] whitespace-nowrap">がな</div>
              <div className="absolute left-[694px] top-[618px] w-[202px] h-[50px] bg-[#babc87] text-[#3c3c04] text-[48px] leading-[50px] whitespace-nowrap [font-feature-settings:normal] pl-[2px]">読み仮名</div>
              <svg className="absolute left-[690px] top-[590px]" width="210" height="85" viewBox="0 0 210 85">
                <path d="M14 15 V3 H198 V15 M4 18 V30" fill="none" stroke="#5a5ad0" strokeWidth="1.6" strokeDasharray="8 6" />
                <path d="M14 75 H198" fill="none" stroke="#777" strokeWidth="1.4" strokeDasharray="8 6" />
                <path d="M157 64 L164 71 L157 78 L150 71 Z" fill="#fff" stroke="#333" strokeWidth="1.4" />
                <rect x="5" y="65" width="8" height="9" fill="#fff" stroke="#333" strokeWidth="1.2" />
              </svg>
            </div>
          </div>
        </div>

        <div className="w-[36px] shrink-0 flex flex-col bg-[#f5f4f3]">
          <div className="h-[34px] mt-[3px] border-2 border-[#dcdad7] rounded-[6px] flex items-center justify-center text-[#bbb] text-[20px]">1</div>
          <div className="flex-1 bg-[#c9c9c9]" />
        </div>

        <SnapBar />
      </div>

      <FillDialog />
      <Annotation />
    </div>
  );
};

export default App;
